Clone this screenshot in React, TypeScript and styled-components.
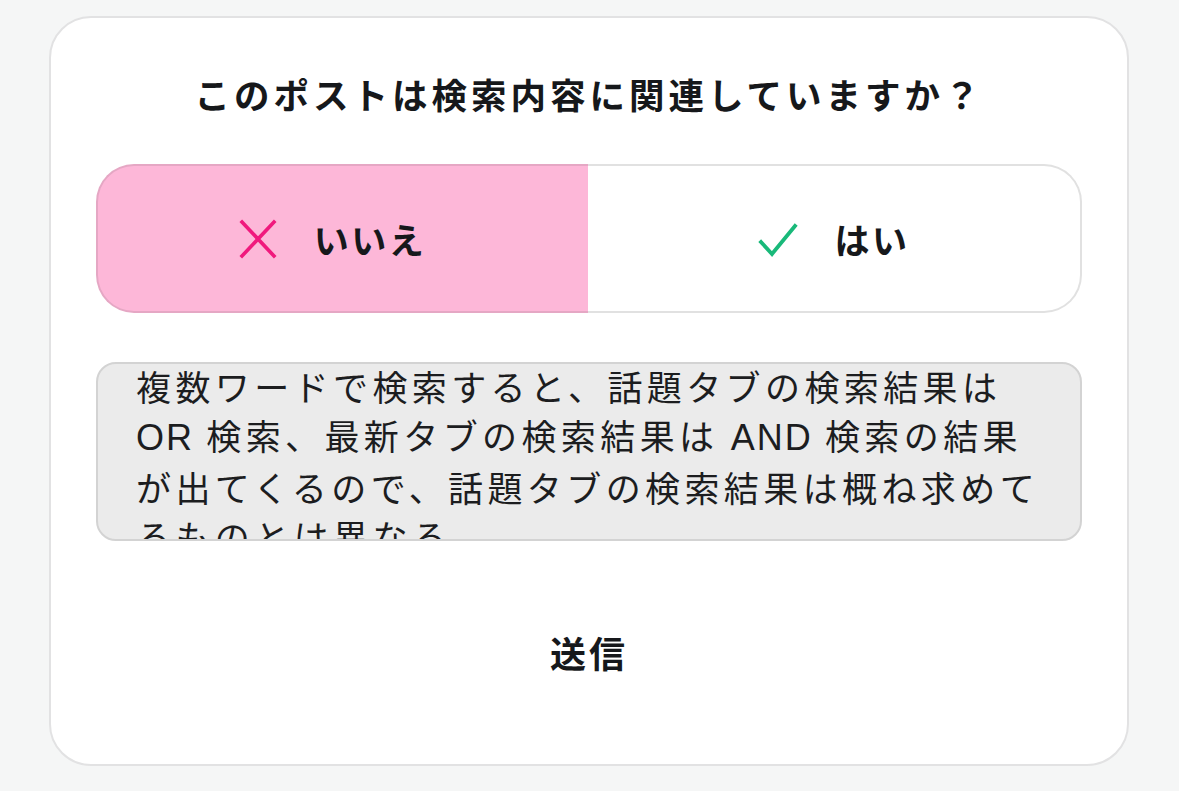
import React from "react";
import styled, { createGlobalStyle } from "styled-components";

const GlobalStyle = createGlobalStyle`
  html, body {
    margin: 0;
    padding: 0;
    background: #f5f6f6;
    font-family: "Noto Sans CJK JP", "Noto Sans", sans-serif;
    color: #16181b;
  }
`;

const Page = styled.div`
  width: 1179px;
  height: 791px;
  padding: 16px 0 0 49px;
  box-sizing: border-box;
`;

const Card = styled.div`
  width: 1080px;
  height: 750px;
  box-sizing: border-box;
  background: #ffffff;
  border: 2px solid #e2e2e3;
  border-radius: 42px;
  padding: 50px 45px 0 45px;
  display: flex;
  flex-direction: column;
`;

const Title = styled.h1`
  margin: 0;
  text-align: center;
  font-size: 35.5px;
  font-weight: 700;
  line-height: 52px;
  letter-spacing: 4px;
`;

const Toggle = styled.div`
  margin-top: 44px;
  height: 149px;
  display: grid;
  grid-template-columns: 492px 1fr;
`;

const Option = styled.button<{ $selected: boolean; $side: "left" | "right" }>`
  display: flex;
  align-items: center;
  justify-content: center;
  gap: 36px;
  box-sizing: border-box;
  height: 100%;
  margin: 0;
  padding: ${(p) => (p.$side === "left" ? "0 22px 0 0" : "0")};
  font-family: inherit;
  font-size: 35px;
  font-weight: 700;
  letter-spacing: 2.5px;
  color: #16181b;
  cursor: pointer;
  background: ${(p) => (p.$selected ? "#fdb7d8" : "#ffffff")};
  border: 2px solid ${(p) => (p.$selected ? "#e5a7c4" : "#e1e1e1")};
  ${(p) =>
    p.$side === "left"
      ? "border-right: none; border-radius: 38px 0 0 38px;"
      : "border-left: none; border-radius: 0 38px 38px 0;"}
`;

const Icon = styled.svg`
  width: 40px;
  height: 40px;
  flex: none;
`;

const Comment = styled.div`
  margin-top: 49px;
  height: 179px;
  box-sizing: border-box;
  background: #ebebeb;
  border: 2px solid #d3d3d3;
  border-radius: 20px;
  overflow: hidden;
  padding: 0 20px 0 38px;
`;

const CommentText = styled.p`
  margin: -3px 0 0 0;
  font-size: 35px;
  line-height: 49px;
  letter-spacing: 4.4px;
  font-weight: 400;
  color: #1c1d1f;
  white-space: nowrap;
`;

const Latin = styled.span`
  letter-spacing: 2px;
  font-family: "Liberation Sans", "Noto Sans CJK JP", sans-serif;
  font-size: 36px;
`;

const Submit = styled.button`
  align-self: center;
  margin-top: 75px;
  background: none;
  border: none;
  padding: 0 20px;
  height: 72px;
  font-family: inherit;
  font-size: 36px;
  font-weight: 700;
  letter-spacing: 3px;
  color: #16181b;
  cursor: pointer;
`;

export default function App() {
  return (
    <>
      <GlobalStyle />
      <Page>
        <Card>
          <Title>このポストは検索内容に関連していますか？</Title>
          <Toggle>
            <Option $selected $side="left">
              <Icon viewBox="0 0 40 40">
                <path d="M4 3 L36 37 M36 3 L4 37" stroke="#f0197d" strokeWidth="3.6" strokeLinecap="square" fill="none" />
              </Icon>
              <span>いいえ</span>
            </Option>
            <Option $selected={false} $side="right">
              <Icon viewBox="0 0 40 40">
                <path d="M3 23 L14 35 L37 7" stroke="#19b97a" strokeWidth="3.8" strokeLinecap="square" strokeLinejoin="miter" fill="none" />
              </Icon>
              <span>はい</span>
            </Option>
          </Toggle>
          <Comment>
            <CommentText>
              複数ワードで検索すると、話題タブの検索結果は
              <br />
              <Latin>OR</Latin> 検索、最新タブの検索結果は <Latin>AND</Latin> 検索の結果
              <br />
              が出てくるので、話題タブの検索結果は概ね求めて
              <br />
              るものとは異なる
            </CommentText>
          </Comment>
          <Submit>送信</Submit>
        </Card>
      </Page>
    </>
  );
}
